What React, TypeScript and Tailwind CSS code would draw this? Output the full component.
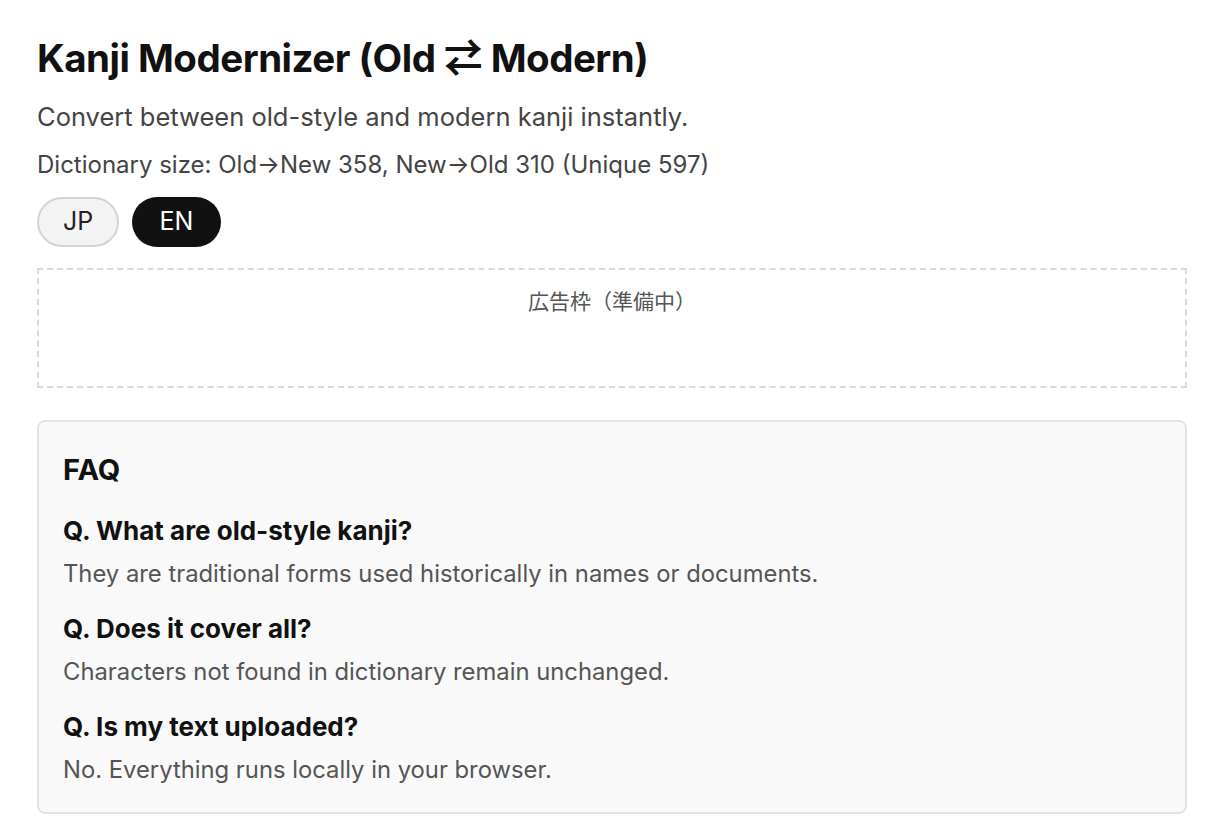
const faqs = [
  {
    q: "Q. What are old-style kanji?",
    a: "They are traditional forms used historically in names or documents.",
  },
  {
    q: "Q. Does it cover all?",
    a: "Characters not found in dictionary remain unchanged.",
  },
  {
    q: "Q. Is my text uploaded?",
    a: "No. Everything runs locally in your browser.",
  },
];

const App = () => {
  return (
    <div className="min-h-screen bg-white font-['Inter','Noto_Sans_CJK_JP',sans-serif] text-[#111]">
      <div className="ml-[37px] w-[1150px] pt-[34px] pb-8">
        <h1 className="text-[38.5px] font-bold leading-[48px] tracking-[-0.5px]">
          Kanji Modernizer (Old ⇄ Modern)
        </h1>
        <p className="mt-[18px] text-[25.5px] leading-[34px] text-[#444]">
          Convert between old-style and modern kanji instantly.
        </p>
        <p className="mt-[15px] text-[24px] leading-[32px] text-[#444]">
          Dictionary size: Old→New 358, New→Old 310 (Unique 597)
        </p>
        <div className="mt-[16px] flex gap-[13px]">
          <button className="h-[50px] w-[82px] rounded-full border-2 border-[#d4d4d4] bg-[#f3f3f3] text-[25px] text-[#222]">
            JP
          </button>
          <button className="h-[50px] w-[89px] rounded-full bg-[#111] text-[25px] text-white">
            EN
          </button>
        </div>

        <div className="mt-[21px] flex h-[120px] justify-center border-2 border-dashed border-[#dadada] pt-[17px] text-[21px] leading-[30px] text-[#555]">
          広告枠（準備中）
        </div>

        <div className="mt-[32px] rounded-[8px] border-2 border-[#e3e3e3] bg-[#f9f9f9] px-[24px] pt-[29px] pb-[26px]">
          <h2 className="text-[29px] font-bold leading-[38px]">FAQ</h2>
          <div className="mt-[25px] flex flex-col gap-[22px]">
            {faqs.map((f) => (
              <div key={f.q}>
                <p className="text-[26px] font-bold leading-[34px]">{f.q}</p>
                <p className="mt-[10px] text-[23.8px] leading-[32px] text-[#555]">
                  {f.a}
                </p>
              </div>
            ))}
          </div>
        </div>
      </div>
    </div>
  );
};

export default App;
